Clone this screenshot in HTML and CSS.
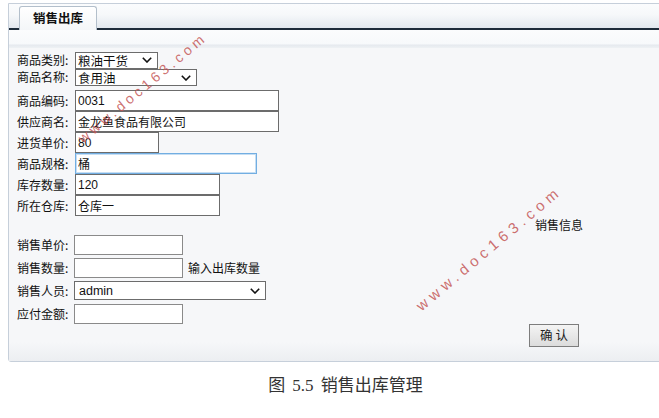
FILE: index.html
```html
<!DOCTYPE html>
<html lang="zh-CN">
<head>
<meta charset="utf-8">
<title>销售出库</title>
<link rel="stylesheet" href="styles.css">
</head>
<body>
<div class="frame">
  <div class="tabbar"><div class="tab">销售出库</div></div>
  <div class="substrip"></div>
  <form class="content">
    <div class="row h18">
      <label class="lbl">商品类别:</label>
      <div class="sel s1 w83"><span class="seltext">粮油干货</span><svg class="chev" viewBox="0 0 10 6"><path d="M0.8 0.8 L5 5 L9.2 0.8" /></svg></div>
    </div>
    <div class="row h21 top">
      <label class="lbl lblsel2">商品名称:</label>
      <div class="sel s1 w122"><span class="seltext">食用油</span><svg class="chev" viewBox="0 0 10 6"><path d="M0.8 0.8 L5 5 L9.2 0.8" /></svg></div>
    </div>
    <div class="row h21"><label class="lbl">商品编码:</label><input class="inp dark w204" value="0031"></div>
    <div class="row h21"><label class="lbl">供应商名:</label><input class="inp dark w204" value="金龙鱼食品有限公司"></div>
    <div class="row h21"><label class="lbl">进货单价:</label><input class="inp dark w84" value="80"></div>
    <div class="row h21"><label class="lbl">商品规格:</label><input class="inp focus w182" value="桶"></div>
    <div class="row h21"><label class="lbl">库存数量:</label><input class="inp dark w145" value="120"></div>
    <div class="row h21"><label class="lbl">所在仓库:</label><input class="inp dark w145" value="仓库一"></div>
    <div class="row h17 info"><span class="infotext">销售信息</span></div>
    <div class="row h23"><label class="lbl">销售单价:</label><input class="inp light w108" value=""></div>
    <div class="row h23"><label class="lbl">销售数量:</label><input class="inp light w108" value=""><span class="hint">输入出库数量</span></div>
    <div class="row h23">
      <label class="lbl">销售人员:</label>
      <div class="sel s2 w191"><span class="seltext latin">admin</span><svg class="chev" viewBox="0 0 10 6"><path d="M0.8 0.8 L5 5 L9.2 0.8" /></svg></div>
    </div>
    <div class="row h23"><label class="lbl">应付金额:</label><input class="inp light w108" value=""></div>
    <div class="btnrow"><button type="button" class="btn">确 认</button></div>
  </form>
</div>
<p class="caption">图 5.5 销售出库管理</p>
<span class="wm wm1">www.doc163.com</span>
<span class="wm wm2">www.doc163.com</span>
</body>
</html>
```

FILE: styles.css
```css
html, body {
  margin: 0;
  padding: 0;
  background: #ffffff;
  overflow: hidden;
  font-family: "Noto Sans CJK SC", "Liberation Sans", sans-serif;
}

.frame {
  margin: 3px -20px 0 8px;
  border: 1px solid #c6cfda;
  border-radius: 0 0 0 3px;
  background: #f6f7f9;
}

.tabbar {
  height: 24px;
  border-bottom: 2px solid #1e2c3a;
  background: linear-gradient(#fbfcfd 0%, #f6f8fa 45%, #e2e8ee 100%);
  display: flex;
  align-items: flex-end;
  padding-left: 10px;
}

.tab {
  width: 76px;
  height: 22px;
  margin-bottom: -2px;
  border: 1px solid #b3bfcb;
  border-bottom: none;
  border-radius: 3px 3px 0 0;
  background: linear-gradient(#ffffff, #f4f6f8);
  font-size: 12.5px;
  font-weight: bold;
  color: #111;
  display: flex;
  align-items: center;
  justify-content: center;
  line-height: 1;
  padding-bottom: 1px;
}

.substrip {
  height: 18px;
  background: linear-gradient(#fbfcfd 0%, #f7f9fb 75%, #e6eaef 85%, #eef1f4 100%);
}

.content {
  margin: 0;
  padding: 3px 0 14px 8px;
  background: linear-gradient(#f6f7f9 0%, #f6f7f9 94%, #eceef1 100%);
}

.row {
  display: flex;
  align-items: center;
}
.row.top { align-items: flex-start; }
.h17 { height: 17px; }
.h18 { height: 18px; }
.h21 { height: 21px; }
.h23 { height: 23px; }

.lbl {
  width: 58px;
  flex: none;
  font-size: 12px;
  color: #111;
  line-height: 1;
}
.lblsel2 { margin-top: 2px; }

.inp {
  box-sizing: border-box;
  height: 21px;
  margin: 0;
  padding: 0 2px;
  background: #fff;
  font-family: "Liberation Sans", "Noto Sans CJK SC", sans-serif;
  font-size: 12px;
  color: #111;
  outline: none;
}
.inp.dark { border: 1px solid #6c6c6c; }
.inp.light { border: 1px solid #8a8a8a; height: 20px; margin-left: -1px; }
.inp.focus { border: 1px solid #72aee2; box-shadow: inset 0 0 0 1px #c6def3; }

.w83 { width: 83px; }
.w84 { width: 84px; }
.w108 { width: 109px; }
.w122 { width: 122px; }
.w145 { width: 145px; }
.w182 { width: 182px; }
.w191 { width: 192px; }
.w204 { width: 204px; }

.sel {
  position: relative;
  flex: none;
  box-sizing: border-box;
  display: flex;
  align-items: center;
  background: #fff;
  border: 1px solid #6c6c6c;
  color: #111;
  padding-left: 2px;
}
.s1 { height: 17px; }
.s2 { height: 19px; margin-left: -1px; padding-left: 4px; }
.seltext {
  font-size: 12.5px;
  line-height: 13px;
  height: 13px;
  white-space: nowrap;
}
.seltext.latin {
  font-family: "Liberation Sans", sans-serif;
  font-size: 12.5px;
  line-height: 14px;
  height: 14px;
}
.chev {
  position: absolute;
  right: 5px;
  top: 50%;
  width: 10px;
  height: 6px;
  margin-top: -3px;
  fill: none;
  stroke: #111;
  stroke-width: 1.6;
}

.hint {
  margin-left: 5px;
  font-size: 12px;
  color: #111;
  line-height: 1;
}

.info { padding-left: 518px; }
.infotext {
  font-size: 12px;
  color: #111;
  line-height: 1;
}

.btnrow {
  display: flex;
  padding-left: 512px;
  margin-top: -1px;
}
.btn {
  box-sizing: border-box;
  width: 50px;
  height: 23px;
  margin: 0;
  padding: 0;
  border: 1px solid #7d7d7d;
  border-radius: 0;
  background: linear-gradient(#f4f4f4, #dcdcdc);
  font-family: "Noto Sans CJK SC", sans-serif;
  font-size: 12.5px;
  color: #222;
  line-height: 1;
}

.caption {
  margin: 14px 0 0 0;
  padding-left: 32px;
  text-align: center;
  font-family: "Liberation Serif", "Noto Sans CJK SC", serif;
  font-size: 17px;
  line-height: 20px;
  color: #333;
  word-spacing: 3px;
}

.wm {
  position: absolute;
  transform-origin: 0 50%;
  transform: rotate(-40deg);
  font-family: "Liberation Sans", sans-serif;
  color: rgba(196, 86, 86, 0.85);
  white-space: nowrap;
  pointer-events: none;
  line-height: 1;
}
.wm1 {
  left: 80px;
  top: 133px;
  font-size: 14px;
  letter-spacing: 3.8px;
}
.wm2 {
  left: 418px;
  top: 300px;
  font-size: 15px;
  letter-spacing: 4.8px;
}
```
